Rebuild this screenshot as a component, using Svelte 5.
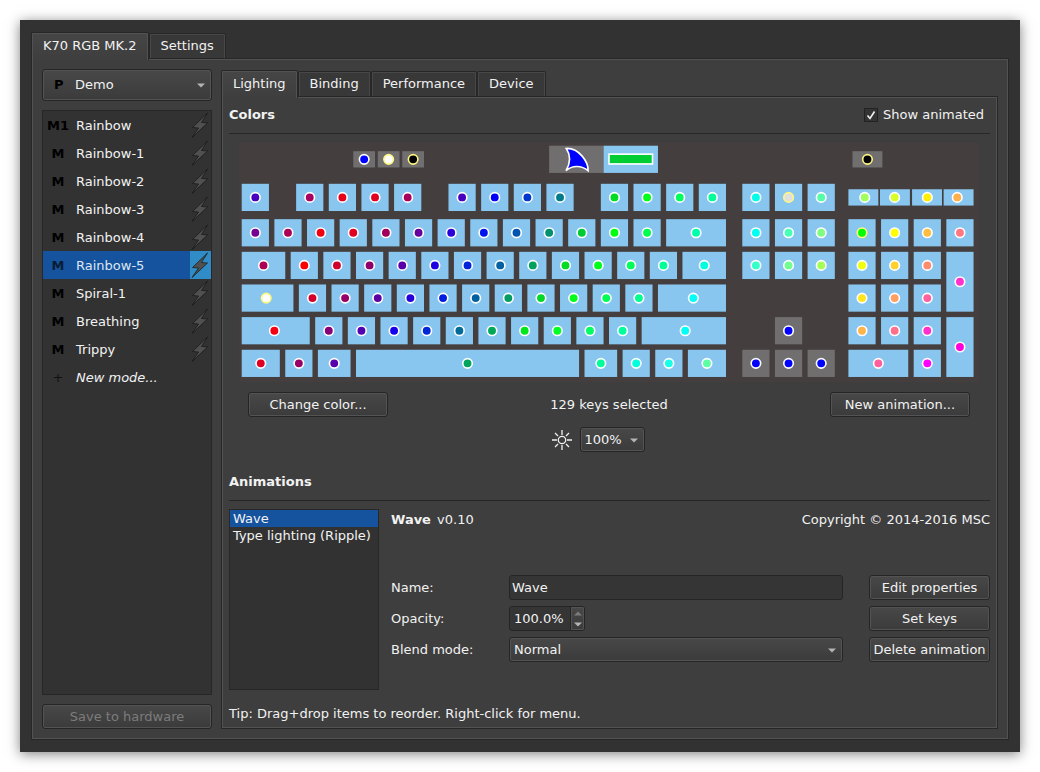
<script lang="ts">
    type Key = {
        x: number;
        y: number;
        w: number;
        h: number;
        dot: number;
        color: string;
        off?: boolean;
        shared?: boolean;
    };

    const PITCH = 12;

    const deviceTabs = ["K70 RGB MK.2", "Settings"];
    const pageTabs = ["Lighting", "Binding", "Performance", "Device"];
    const modes = [
        "Rainbow",
        "Rainbow-1",
        "Rainbow-2",
        "Rainbow-3",
        "Rainbow-4",
        "Rainbow-5",
        "Spiral-1",
        "Breathing",
        "Trippy",
    ];
    const animations = ["Wave", "Type lighting (Ripple)"];

    let deviceTab = $state(0);
    let pageTab = $state(0);
    let mode = $state(5);
    let animation = $state(0);
    let showAnimated = $state(true);
    let name = $state("Wave");
    let opacity = $state(100);
    let opacityText = $derived(opacity.toFixed(1) + "%");

    // Keys of the common size, one pitch apart
    function run(dot: number, y: number, colors: string, extra = {}): Key[] {
        return colors.split(" ").map((c, i) => ({
            x: dot + i * PITCH - 5,
            y: y - 5,
            w: 10,
            h: 10,
            dot: dot + i * PITCH,
            color: "#" + c,
            ...extra,
        }));
    }

    // A single key with its own left edge and size
    function key(x: number, y: number, w: number, dot: number, color: string, h = 10, extra = {}): Key {
        return { x, y: y - h / 2, w, h, dot, color: "#" + color, ...extra };
    }

    const keys: Key[] = [
        // Profile, brightness and lock buttons
        key(42, 6, 8, 46, "0000ff", 6, { off: true }),
        key(51, 6, 8, 55, "ffffff", 6, { off: true, shared: true }),
        key(60, 6, 8, 64, "000000", 6, { off: true, shared: true }),
        key(225.5, 6, 11, 231, "000000", 6, { off: true, shared: true }),

        // Function row
        ...run(6, 20, "4600be"),
        ...run(26, 20, "aa0060 e6001a e00022 a8005c"),
        ...run(82, 20, "4600be 0000fa 0038cc 007b8c"),
        ...run(138, 20, "00dc22 00ff18 00ff5c 00ff98"),
        ...run(190, 20, "00ffe8"),
        ...run(202, 20, "e0e0e0", { shared: true }),
        ...run(214, 20, "55ffaa"),
        key(224, 20, 11, 230, "a0ff5c", 6),
        key(235.6, 20, 11, 241, "d8ff26", 6),
        key(247.4, 20, 11, 253, "ffee00", 6),
        key(259, 20, 11, 264, "ffb04c", 6),

        // Number row
        ...run(6, 33, "740094 ac0054 f00010 e00022 a0005c 64009c 2a00d8 0014ee 0054b0 009070 00cc34 00ff0c 00ff4c"),
        key(157, 33, 22, 168, "00ffa8"),
        ...run(190, 33, "00fff0 48ffb8 80ff80"),
        ...run(229, 33, "00ff00", { shared: true }),
        ...run(241, 33, "ffff00 ffbe40 ff7884"),

        // Q row
        key(1, 45, 16, 9, "ac0054"),
        ...run(24, 45, "ff0000 d0002e 90006c 5800aa 1c00e2 0024dc 0060a0 00a060 00dc22 00ff18 00ff58 00ff98"),
        key(163, 45, 16, 171, "00ffe0"),
        ...run(190, 45, "34ffc8 70ff90 a4ff58"),
        ...run(229, 45, "f0ff0c ffd02e ff8c70"),
        key(260, 51, 10, 265, "ff30cc", 22),

        // A row
        key(1, 57, 19, 10, "ffffff", 10, { shared: true }),
        ...run(27, 57, "d4002c 980068 5c00a4 2200dc 001cde 0060a0 009c64 00d828 00ff18 00ff54 00ff90"),
        key(154, 57, 25, 167, "00fff8"),
        ...run(229, 57, "ffe61c ffa060 ff60a0"),

        // Z row
        key(1, 69, 25, 13, "f40010"),
        ...run(33, 69, "880078 5000b0 1400ec 0028d8 006a98 00a858 00e61a 00ff24 00ff60 00ff9c"),
        key(148, 69, 31, 164, "00fff4"),
        ...run(202, 69, "0000ff", { off: true }),
        ...run(229, 69, "ffb44a ff708c ff30cc"),
        key(260, 75, 10, 265, "ff00dc", 22),

        // Bottom row
        key(1, 81, 14, 8, "e00022"),
        ...run(22, 81, "980068"),
        key(29, 81, 12, 35, "5800ac"),
        key(43, 81, 82, 84, "00a45c"),
        key(127, 81, 12, 133, "00ff98"),
        ...run(146, 81, "00ffdc 18ffe8"),
        key(165, 81, 14, 172, "5cffa4"),
        ...run(190, 81, "0000ff 0000ff 0000ff", { off: true }),
        key(224, 81, 22, 235, "ff609c"),
        ...run(253, 81, "ff00ff"),
    ];
</script>

{#snippet arrow()}
    <svg class="arrow" viewBox="0 0 8 5" aria-hidden="true">
        <path d="M0 0.5h8L4 4.5z" />
    </svg>
{/snippet}

<main class="window">
    <div class="tabs" role="tablist">
        {#each deviceTabs as tab, i}
            <button class="tab" class:active={deviceTab === i} role="tab" aria-selected={deviceTab === i} onclick={() => (deviceTab = i)}>
                {tab}
            </button>
        {/each}
    </div>

    <div class="pane device">
        <!-- Profile and modes -->
        <aside class="sidebar">
            <div class="combo profile">
                <b class="profile-mark">P</b>
                <select aria-label="Profile">
                    <option>Demo</option>
                </select>
                {@render arrow()}
            </div>

            <ul class="modes">
                {#each modes as item, i}
                    <li class="mode" class:selected={mode === i}>
                        <button class="mode-name" onclick={() => (mode = i)}>
                            <b class="mode-mark">{i === 0 ? "M1" : "M"}</b>
                            <span class="mode-text">{item}</span>
                        </button>
                        <button class="mode-bolt" aria-label="Events of {item}">
                            <svg viewBox="0 0 20 26" aria-hidden="true">
                                <path d="M17.500 1 2.500 15.500 8.500 16 2 25.500 17.500 11 11.500 10.500z" />
                            </svg>
                        </button>
                    </li>
                {/each}
                <li class="mode">
                    <button class="mode-name">
                        <span class="mode-mark plus">+</span>
                        <i class="mode-text">New mode...</i>
                    </button>
                </li>
            </ul>

            <button class="btn" disabled>Save to hardware</button>
        </aside>

        <section class="page">
            <div class="tabs" role="tablist">
                {#each pageTabs as tab, i}
                    <button class="tab" class:active={pageTab === i} role="tab" aria-selected={pageTab === i} onclick={() => (pageTab = i)}>
                        {tab}
                    </button>
                {/each}
            </div>

            <div class="pane lighting">
                <header class="heading">
                    <h2>Colors</h2>
                    <label class="check">
                        <span class="check-box">
                            <input type="checkbox" bind:checked={showAnimated} />
                            {#if showAnimated}
                                <svg viewBox="0 0 14 14" aria-hidden="true">
                                    <path d="M3.500 7.500 6 10.500 10.500 3.500" />
                                </svg>
                            {/if}
                        </span>
                        Show animated
                    </label>
                </header>

                <svg class="keyboard" viewBox="0 0 272 88" role="img" aria-label="Keyboard layout">
                    <rect class="board" width="272" height="88" />
                    <rect class="key off" x="114" y="1" width="20" height="10" />
                    <rect class="key" x="134" y="1" width="20" height="10" />
                    <path class="sail" d="M120.300 2C125 1.800 128.500 7 128.300 10.200 126 8.200 122.500 8 120.200 10.200 122 7 122 4.500 120.300 2z" />
                    <rect class="bar" x="136" y="4.100" width="16" height="3.600" />
                    {#each keys as k}
                        <rect class="key" class:off={k.off} x={k.x} y={k.y} width={k.w} height={k.h} />
                        <circle class="dot" class:shared={k.shared} cx={k.dot} cy={k.y + k.h / 2} r="1.750" fill={k.color} />
                    {/each}
                </svg>

                <div class="actions">
                    <button class="btn">Change color...</button>
                    <span>129 keys selected</span>
                    <button class="btn">New animation...</button>
                </div>

                <div class="brightness">
                    <svg class="sun" viewBox="0 0 20 20" aria-hidden="true">
                        <circle cx="10" cy="10" r="3.700" />
                        <path d="M10 0v5M10 15v5M0 10h5M15 10h5M3 3l3 3M14 14l3 3M17 3l-3 3M6 14l-3 3" />
                    </svg>
                    <div class="combo">
                        <select aria-label="Brightness">
                            <option>100%</option>
                        </select>
                        {@render arrow()}
                    </div>
                </div>

                <header class="heading">
                    <h2>Animations</h2>
                </header>

                <div class="animations">
                    <ul class="anim-list">
                        {#each animations as item, i}
                            <li>
                                <button class:selected={animation === i} onclick={() => (animation = i)}>{item}</button>
                            </li>
                        {/each}
                    </ul>

                    <div class="anim-body">
                        <div class="anim-info">
                            <span><b>Wave</b> v0.10</span>
                            <span>Copyright © 2014-2016 MSC</span>
                        </div>
                        <div class="anim-form">
                            <div class="fields">
                                <label for="anim-name">Name:</label>
                                <input id="anim-name" class="field" type="text" bind:value={name} />

                                <label for="anim-opacity">Opacity:</label>
                                <div class="spin">
                                    <input id="anim-opacity" type="text" value={opacityText} />
                                    <div class="spin-buttons">
                                        <button class="up" aria-label="Increase" disabled={opacity >= 100} onclick={() => (opacity += 1)}>
                                            {@render arrow()}
                                        </button>
                                        <button aria-label="Decrease" disabled={opacity <= 0} onclick={() => (opacity -= 1)}>
                                            {@render arrow()}
                                        </button>
                                    </div>
                                </div>

                                <label for="anim-blend">Blend mode:</label>
                                <div class="combo">
                                    <select id="anim-blend">
                                        <option>Normal</option>
                                    </select>
                                    {@render arrow()}
                                </div>
                            </div>
                            <div class="anim-buttons">
                                <button class="btn">Edit properties</button>
                                <button class="btn">Set keys</button>
                                <button class="btn">Delete animation</button>
                            </div>
                        </div>
                    </div>
                </div>

                <p class="tip">Tip: Drag+drop items to reorder. Right-click for menu.</p>
            </div>
        </section>
    </div>
</main>

<style>
    :global(body) {
        margin: 0;
        background: #fff;
    }

    .window {
        --dark: #272727;
        --light: #525252;
        --panel: #3e3e3e;
        --base: #323232;
        --text: #f2f2f2;
        --blue: #15539e;
        display: flex;
        flex-direction: column;
        box-sizing: border-box;
        min-height: calc(100vh - 40px);
        margin: 20px;
        padding: 12px 11px;
        background: #323232;
        box-shadow: 0 2px 12px rgba(0, 0, 0, 0.5);
        color: var(--text);
        font: 13px/18px "DejaVu Sans", sans-serif;
    }

    button,
    input,
    select {
        box-sizing: border-box;
        margin: 0;
        padding: 0;
        border: 0;
        background: none;
        color: inherit;
        font: inherit;
        outline: none;
        appearance: none;
    }

    ul {
        margin: 0;
        padding: 0;
        list-style: none;
    }

    h2,
    p {
        margin: 0;
        font-size: 13px;
    }

    /* Tabs */
    .tabs {
        display: flex;
        align-items: flex-end;
    }

    .tab {
        height: 25px;
        padding: 0 11px;
        border: 1px solid var(--dark);
        border-bottom: 0;
        border-radius: 2px 2px 0 0;
        background: #383838;
        box-shadow: inset 1px 1px 0 #484848, inset -1px 0 0 #484848;
    }

    .tab.active {
        position: relative;
        height: 28px;
        margin-bottom: -2px;
        padding-bottom: 2px;
        background: linear-gradient(#464646, var(--panel));
        box-shadow: inset 1px 1px 0 var(--light), inset -1px 0 0 var(--light);
    }

    .pane {
        flex: 1;
        border: 1px solid var(--dark);
        background: var(--panel);
        box-shadow: inset 0 0 0 1px var(--light);
    }

    .device {
        display: flex;
        gap: 9px;
        padding: 10px;
    }

    /* Buttons and drop-downs */
    .btn,
    .combo select {
        height: 25px;
        border: 1px solid #252525;
        border-radius: 3px;
        background: linear-gradient(#484848, #3b3b3b);
        box-shadow: inset 0 0 0 1px #535353;
    }

    .btn:disabled {
        color: #7c7c7c;
    }

    .combo {
        position: relative;
    }

    .combo select {
        display: block;
        width: 100%;
        padding: 0 4px;
    }

    .arrow {
        width: 8px;
        height: 5px;
        fill: #b4b4b4;
    }

    .combo .arrow {
        position: absolute;
        top: calc(50% - 2px);
        right: 7px;
        pointer-events: none;
    }

    /* Sidebar */
    .sidebar {
        display: flex;
        flex-direction: column;
        gap: 9px;
        width: 170px;
    }

    .profile select {
        height: 32px;
        padding-left: 32px;
    }

    .profile-mark {
        position: absolute;
        top: 7px;
        left: 12px;
        color: #000;
    }

    .modes {
        flex: 1;
        border: 1px solid var(--dark);
        background: var(--base);
    }

    .mode {
        display: flex;
        height: 28px;
    }

    .mode-name {
        display: flex;
        flex: 1;
        align-items: center;
        padding-top: 2px;
        text-align: left;
    }

    .mode-mark {
        width: 30px;
        color: #000;
        text-align: center;
    }

    .plus {
        color: #111;
    }

    .mode-text {
        padding-left: 3px;
    }

    .mode-bolt {
        width: 21px;
        height: 28px;
    }

    .mode-bolt svg {
        display: block;
        width: 20px;
        height: 26px;
        fill: #505050;
        stroke: #141414;
        stroke-width: 0.7;
    }

    .mode.selected {
        background: var(--blue);
    }

    .mode.selected .mode-mark {
        color: #0a1c36;
    }

    .mode.selected .mode-text {
        color: #dce6f2;
    }

    .mode.selected .mode-bolt {
        background: #308cc6;
    }

    /* Lighting page */
    .page {
        display: flex;
        flex: 1;
        flex-direction: column;
        min-width: 0;
        padding-top: 1px;
    }

    .lighting {
        display: flex;
        flex-direction: column;
        padding: 8px 7px 5px;
    }

    .heading {
        display: flex;
        align-items: center;
        justify-content: space-between;
        height: 20px;
        padding-bottom: 8px;
        border-bottom: 1px solid var(--dark);
    }

    .check {
        display: flex;
        align-items: center;
        gap: 5px;
        padding-right: 6px;
    }

    .check-box {
        position: relative;
        width: 14px;
        height: 14px;
    }

    .check-box input {
        display: block;
        width: 14px;
        height: 14px;
        border: 1px solid #222;
        background: #343434;
    }

    .check-box svg {
        position: absolute;
        inset: 0;
        fill: none;
        stroke: #f2f2f2;
        stroke-width: 1.6;
        pointer-events: none;
    }

    .keyboard {
        display: block;
        margin: 9px 11px 10px 10px;
    }

    .board {
        fill: #443f3e;
    }

    .key {
        fill: #88c6f0;
    }

    .key.off {
        fill: #706e6e;
    }

    .dot,
    .sail,
    .bar {
        stroke: #fff;
        stroke-width: 0.6;
    }

    .dot.shared {
        stroke: #fff680;
    }

    .sail {
        fill: #0000ff;
    }

    .bar {
        fill: #00cc33;
    }

    .actions {
        display: flex;
        align-items: center;
        justify-content: space-between;
        padding: 0 20px 0 19px;
    }

    .actions .btn {
        width: 140px;
    }

    .brightness {
        display: flex;
        align-items: center;
        justify-content: center;
        gap: 8px;
        margin: 10px 0 20px;
        padding-right: 23px;
    }

    .brightness .combo {
        width: 65px;
    }

    .sun {
        width: 20px;
        height: 20px;
        fill: none;
        stroke: #f2f2f2;
        stroke-width: 1.3;
    }

    /* Animations */
    .animations {
        display: flex;
        flex: 1;
        gap: 12px;
        margin-top: 8px;
    }

    .anim-list {
        width: 148px;
        border: 1px solid var(--dark);
        background: var(--base);
    }

    .anim-list button {
        display: block;
        width: 100%;
        padding-left: 3px;
        line-height: 17px;
        text-align: left;
        white-space: nowrap;
    }

    .anim-list .selected {
        background: var(--blue);
    }

    .anim-body {
        flex: 1;
        padding-top: 2px;
    }

    .anim-info {
        display: flex;
        justify-content: space-between;
        margin-bottom: 46px;
    }

    .anim-info b {
        margin-right: 2px;
    }

    .anim-form {
        display: flex;
        gap: 26px;
    }

    .fields {
        display: grid;
        flex: 1;
        grid-template-columns: 118px 1fr;
        grid-auto-rows: 25px;
        row-gap: 6px;
        align-items: center;
    }

    .field,
    .spin {
        height: 25px;
        border: 1px solid #252525;
        border-radius: 3px;
        background: #353535;
    }

    .field {
        min-width: 0;
        padding-left: 2px;
    }

    .spin {
        display: flex;
        box-sizing: border-box;
        width: 76px;
    }

    .spin input {
        flex: 1;
        min-width: 0;
        padding-left: 4px;
    }

    .spin-buttons {
        display: flex;
        flex-direction: column;
        box-sizing: border-box;
        width: 14px;
        border-left: 1px solid #252525;
        border-radius: 0 2px 2px 0;
        background: linear-gradient(#484848, #3b3b3b);
        box-shadow: inset 0 0 0 1px #535353;
    }

    .spin-buttons button {
        display: flex;
        flex: 1;
        align-items: center;
        justify-content: center;
    }

    .spin-buttons button:disabled {
        opacity: 0.5;
    }

    .up .arrow {
        transform: rotate(180deg);
    }

    .anim-buttons {
        display: flex;
        flex-direction: column;
        gap: 6px;
        width: 121px;
    }

    .tip {
        margin-top: 15px;
    }
</style>
